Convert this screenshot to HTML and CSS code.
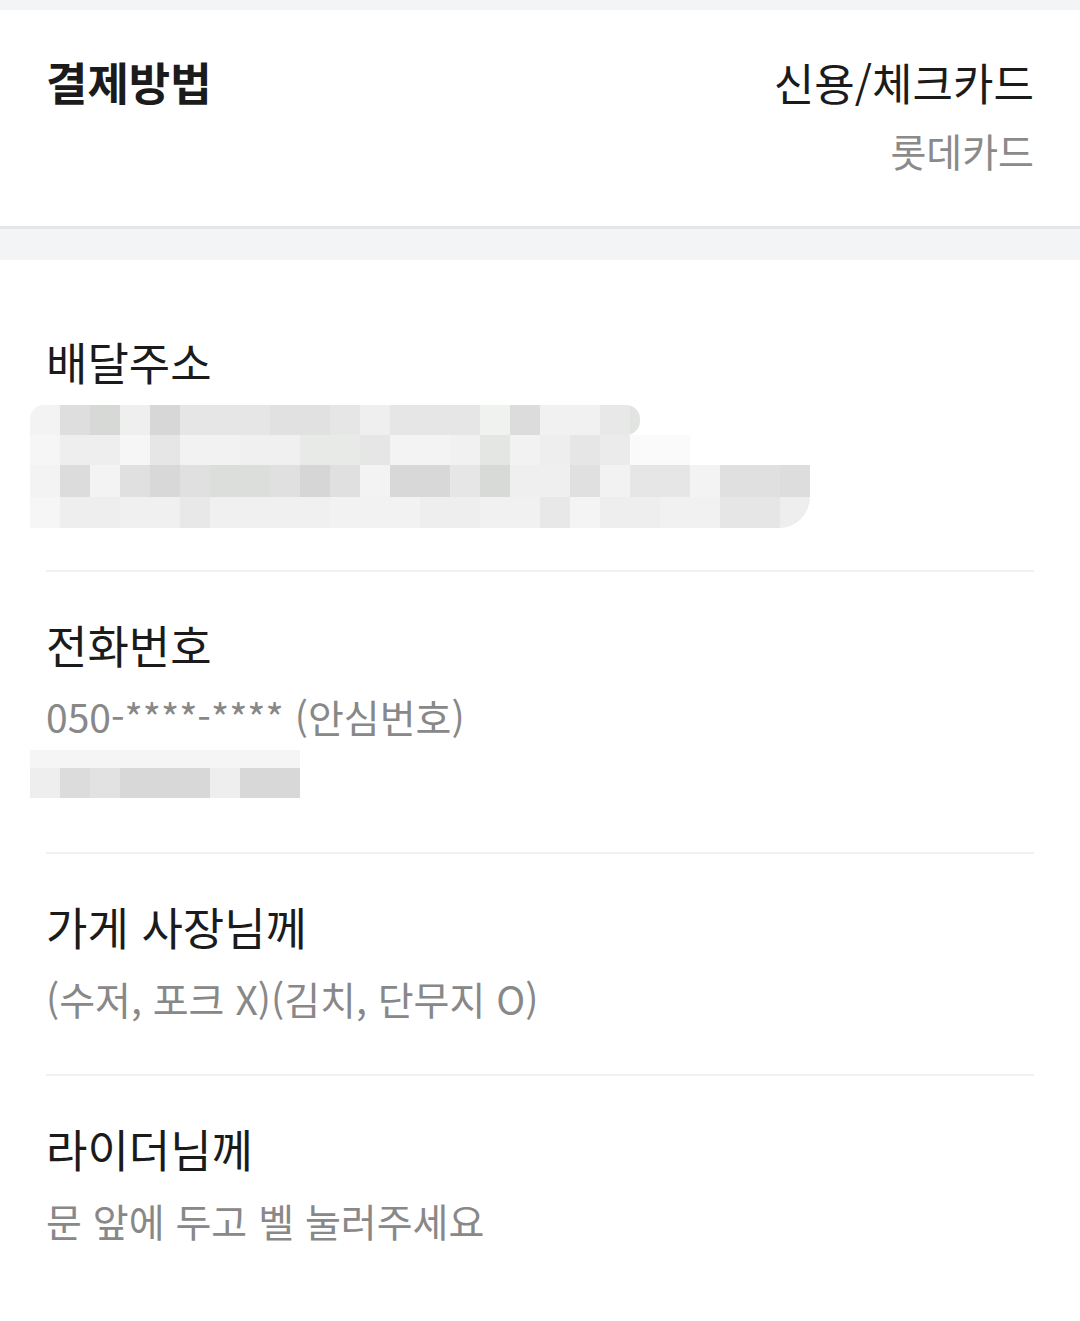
FILE: index.html
```html
<!DOCTYPE html>
<html lang="ko">
  <head>
    <meta charset="UTF-8" />
    <meta name="viewport" content="width=device-width, initial-scale=1.0" />
    <link rel="stylesheet" href="styles.css">
    <title>주문 상세</title>
  </head>
  <body>
    <div class="page">
      <!-- 결제방법 -->
      <section class="pay">
        <h2 class="pay-title">결제방법</h2>
        <div class="pay-info">
          <p class="pay-method">신용/체크카드</p>
          <p class="pay-card">롯데카드</p>
        </div>
      </section>

      <div class="gap"></div>

      <!-- 배달 정보 -->
      <section class="info">
        <div class="info-row address">
          <h3>배달주소</h3>
          <div class="mosaic">
            <div class="m-row m-a"></div>
            <div class="m-row m-b"></div>
            <div class="m-row m-c"></div>
            <div class="m-row m-d"></div>
          </div>
        </div>

        <div class="info-row phone">
          <h3>전화번호</h3>
          <p>050-****-**** (안심번호)</p>
          <div class="mosaic small">
            <div class="m-row m-e"></div>
            <div class="m-row m-f"></div>
          </div>
        </div>

        <div class="info-row">
          <h3>가게 사장님께</h3>
          <p>(수저, 포크 X)(김치, 단무지 O)</p>
        </div>

        <div class="info-row">
          <h3>라이더님께</h3>
          <p>문 앞에 두고 벨 눌러주세요</p>
        </div>
      </section>
    </div>
  </body>
</html>
```

FILE: styles.css
```css
/* Base */
html,
body {
  margin: 0;
  padding: 0;
  background: #fff;
}
body {
  font-family: "Noto Sans CJK KR", "Noto Sans", sans-serif;
  color: #1b1b1b;
}
h2,
h3,
p {
  margin: 0;
  font-weight: 400;
}
.page {
  border-top: 10px solid #f3f4f6;
}

/* Payment */
.pay {
  display: flex;
  justify-content: space-between;
  padding: 0 46px;
  height: 216px;
  border-bottom: 3px solid #e5e6e8;
}
.pay-title {
  font-size: 45px;
  font-weight: 700;
  line-height: 56px;
  margin-top: 44px;
}
.pay-info {
  text-align: right;
  margin-top: 44px;
}
.pay-method {
  font-size: 44px;
  line-height: 56px;
}
.pay-card {
  font-size: 39px;
  line-height: 48px;
  margin-top: 16px;
  color: #8a8a8a;
}
.gap {
  height: 31px;
  background: #f3f4f6;
}

/* Info rows */
.info {
  padding: 0 46px;
}
.info-row {
  padding: 45px 0 48px;
  border-bottom: 2px solid #f0f1f2;
}
.info-row:last-child {
  border-bottom: 0;
}
.info-row.address {
  padding-top: 74px;
  padding-bottom: 42px;
}
.info-row.phone {
  padding-bottom: 54px;
}
.info-row h3 {
  font-size: 45px;
  line-height: 56px;
}
.info-row p {
  font-size: 39px;
  line-height: 56px;
  margin-top: 15px;
  color: #888;
}

/* Blurred text */
.mosaic {
  margin: 15px 0 0 -16px;
}
.mosaic.small {
  margin-top: 6px;
}
.m-row {
  height: 30px;
}
.m-a {
  width: 610px;
  border-radius: 14px 14px 14px 0;
  background: linear-gradient(90deg,
    #f3f3f3 0 30px, #dedede 30px 60px, #d7d9d7 60px 90px, #efefef 90px 120px,
    #d7d7d7 120px 150px, #e6e6e6 150px 240px, #e1e1e1 240px 300px,
    #e5e6e5 300px 330px, #efefef 330px 360px, #e6e6e6 360px 450px,
    #f0f2f0 450px 480px, #dcdcdc 480px 510px, #f1f1f1 510px 570px,
    #e8e8e8 570px 600px, #e2e4e2 600px 610px);
}
.m-b {
  width: 660px;
  background: linear-gradient(90deg,
    #f6f6f6 0 30px, #eeeeee 30px 90px, #f6f6f6 90px 120px, #e6e6e6 120px 150px,
    #f2f2f2 150px 210px, #f0f0f0 210px 270px, #e8eae8 270px 330px,
    #e6e6e6 330px 360px, #f3f3f3 360px 420px, #f1f1f1 420px 450px,
    #e4e6e4 450px 480px, #f2f2f2 480px 510px, #eeeeee 510px 540px,
    #e6e6e6 540px 570px, #ebebeb 570px 600px, #fafafa 600px 660px);
}
.m-c {
  width: 780px;
  height: 32px;
  background: linear-gradient(90deg,
    #f3f3f3 0 30px, #dcdcdc 30px 60px, #f3f3f3 60px 90px, #e0e0e0 90px 120px,
    #d8d8d8 120px 150px, #e0e0e0 150px 180px, #dcdedc 180px 240px,
    #e0e0e0 240px 270px, #d6d6d6 270px 300px, #e0e0e0 300px 330px,
    #f3f3f3 330px 360px, #d8d8d8 360px 420px, #e6e6e6 420px 450px,
    #d8dad8 450px 480px, #efefef 480px 540px, #e0e0e0 540px 570px,
    #f2f2f2 570px 600px, #e6e6e6 600px 660px, #f3f3f3 660px 690px,
    #e0e0e0 690px 750px, #dddddd 750px 780px);
}
.m-d {
  width: 780px;
  height: 31px;
  border-radius: 0 0 40px 0;
  background: linear-gradient(90deg,
    #f6f6f6 0 30px, #eeeeee 30px 90px, #f0f0f0 90px 150px, #e8e8e8 150px 180px,
    #f0f0f0 180px 300px, #f2f2f2 300px 390px, #eeeeee 390px 450px,
    #f1f1f1 450px 510px, #e8e8e8 510px 540px, #f4f4f4 540px 570px,
    #eeeeee 570px 630px, #f1f1f1 630px 690px, #e6e6e6 690px 750px,
    #eeeeee 750px 780px);
}
.m-e {
  width: 270px;
  height: 18px;
  background: #f5f5f5;
}
.m-f {
  width: 270px;
  height: 30px;
  background: linear-gradient(90deg,
    #eeeeee 0 30px, #dcdcdc 30px 60px, #e2e2e2 60px 90px, #d8d8d8 90px 180px,
    #eeeeee 180px 210px, #d8d8d8 210px 270px);
}
```
